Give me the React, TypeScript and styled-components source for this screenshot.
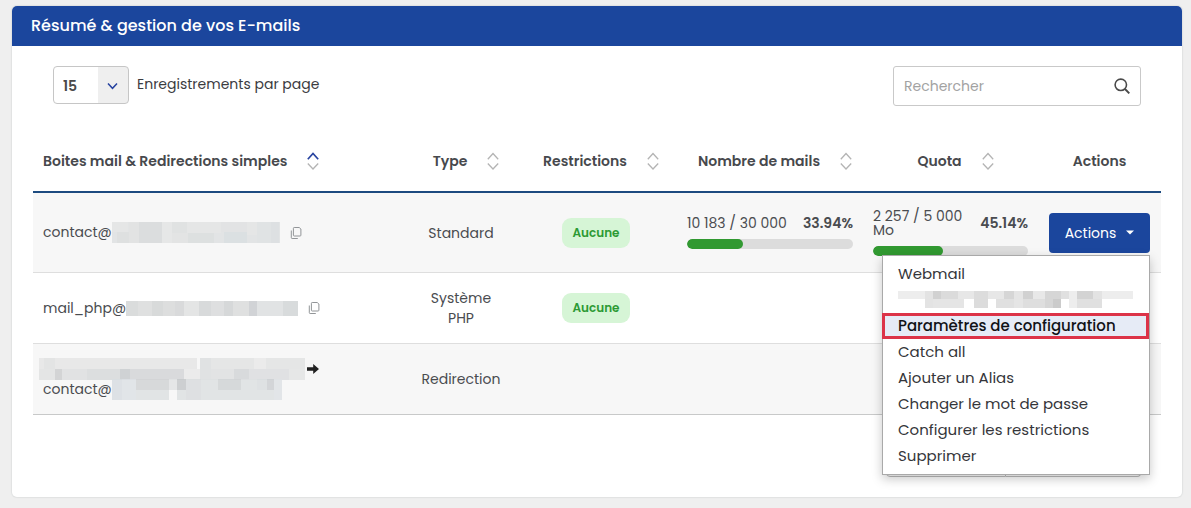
import React, { useState } from "react";
import styled, { createGlobalStyle, css } from "styled-components";

const GlobalStyle = createGlobalStyle`
  *, *::before, *::after { box-sizing: border-box; }
  body {
    margin: 0;
    background: #efefef;
    color: #4a4c50;
    font: 400 14px/20px Poppins, Inter, "Noto Sans", sans-serif;
  }
  button, input, select { font: inherit; color: inherit; }
`;

const Page = styled.main`
  padding: 6px 9px 11px 12px;
`;

const Panel = styled.section`
  background: #fff;
  border-radius: 5px;
  box-shadow: 0 0 1px 1px #e0e2e2;
`;

const PanelTitle = styled.h1`
  margin: 0;
  padding: 8px 19px;
  border-radius: 5px 5px 0 0;
  background: #1b469d;
  color: #fff;
  font-size: 16px;
  font-weight: 500;
  line-height: 24px;
`;

const PanelBody = styled.div`
  padding: 20px 21px;
`;

const Toolbar = styled.div`
  display: flex;
  justify-content: space-between;
  align-items: flex-start;
  padding: 0 20px;
`;

const PageSize = styled.label`
  display: flex;
  gap: 8px;
  color: #3b3c3f;
  line-height: 36px;
`;

const SelectBox = styled.span`
  display: grid;
  grid-template-columns: 1fr 31px;
  width: 76px;
  height: 38px;
  border: 1px solid #c6c6c6;
  border-radius: 4px;
  background: linear-gradient(90deg, #fff 44px, #efefef 44px);
  align-items: center;

  select {
    grid-area: 1 / 1 / 2 / 3;
    width: 100%;
    height: 38px;
    padding: 0 9px;
    border: 0;
    background: none;
    appearance: none;
    color: #4a4a4a;
    font-weight: 600;
  }

  svg {
    grid-area: 1 / 2;
    justify-self: center;
    pointer-events: none;
  }
`;

const SearchBox = styled.label`
  display: flex;
  align-items: center;
  width: 248px;
  height: 40px;
  padding: 0 10px;
  border: 1px solid #c9c9c9;
  border-radius: 3px;

  input {
    flex: 1;
    min-width: 0;
    padding: 0;
    border: 0;
    outline: 0;
    background: none;
  }
  input::placeholder { color: #a2a2a2; opacity: 1; }
`;

const Mailboxes = styled.table`
  width: 100%;
  margin-top: 24px;
  border-collapse: separate;
  border-spacing: 0;
  table-layout: fixed;
`;

const Col = styled.col<{ $width?: number }>`
  width: ${(p) => (p.$width ? `${p.$width}px` : "auto")};
`;

const HeadCell = styled.th<{ $first?: boolean }>`
  height: 63px;
  padding: 0 0 0 10px;
  border-bottom: 2px solid #1d4b80;
  color: #47494d;
  font-weight: 600;
  text-align: ${(p) => (p.$first ? "left" : "center")};
  white-space: nowrap;
`;

const PlainHeadCell = styled(HeadCell)`
  padding: 0;
`;

const SortButton = styled.button`
  display: inline-flex;
  align-items: center;
  gap: 20px;
  padding: 0;
  border: 0;
  background: none;
  font-weight: 600;
`;

const Row = styled.tr<{ $tall?: boolean; $last?: boolean }>`
  height: ${(p) => (p.$tall ? 80 : 71)}px;

  &:nth-child(odd) { background: #f7f7f7; }
  td { border-bottom: 1px solid ${(p) => (p.$last ? "#c8c9c9" : "#dedede")}; }
`;

const Cell = styled.td<{ $left?: boolean }>`
  padding: 0 10px;
  text-align: ${(p) => (p.$left ? "left" : "center")};
`;

const Narrow = styled.div`
  width: 70px;
  margin: 0 auto;
`;

const Address = styled.div`
  display: flex;
  align-items: center;
  line-height: 21px;
`;

const Source = styled(Address)`
  height: 21px;
  margin-left: -4px;
`;

const CopyButton = styled.button`
  display: flex;
  margin-left: 10px;
  padding: 0;
  border: 0;
  background: none;
  cursor: pointer;
`;

const Badge = styled.span`
  display: inline-block;
  padding: 5px 10px;
  border-radius: 9px;
  background: #d6f5d6;
  color: #2c9a34;
  font-size: 12px;
  font-weight: 600;
`;

const Usage = styled.div`
  display: grid;
  gap: 9px;
  text-align: left;
`;

const UsageText = styled.div`
  display: flex;
  justify-content: space-between;
  align-items: center;
  gap: 16px;
  line-height: 14px;
`;

const Percent = styled.strong`
  font-weight: 600;
`;

const Track = styled.div`
  height: 10px;
  border-radius: 5px;
  background: #dcdcdc;
  overflow: hidden;
`;

const Fill = styled.div`
  height: 100%;
  border-radius: 5px;
  background: #319931;
`;

const Dropdown = styled.div`
  position: relative;
  width: 101px;
  margin: 0 auto;
`;

const ActionsButton = styled.button`
  display: flex;
  justify-content: center;
  align-items: center;
  gap: 10px;
  width: 100%;
  height: 40px;
  border: 0;
  border-radius: 4px;
  background: #1b469d;
  color: #fff;
  cursor: pointer;
`;

const Menu = styled.ul`
  position: absolute;
  z-index: 2;
  top: 42px;
  right: 0;
  width: 268px;
  margin: 0;
  padding: 5px 0;
  border: 1px solid #a9a9a9;
  background: #fff;
  box-shadow: 0 4px 10px rgba(0, 0, 0, 0.22);
  list-style: none;
  text-align: left;
`;

const MenuItem = styled.button<{ $active?: boolean }>`
  display: flex;
  align-items: center;
  width: 100%;
  height: 26px;
  padding: 0 15px;
  border: 0;
  background: none;
  color: #35363a;
  font-size: 15px;
  cursor: pointer;

  ${(p) =>
    p.$active &&
    css`
      position: relative;
      width: 267px;
      margin-left: -1px;
      padding: 0 13px;
      border: 3px solid #dc3348;
      background: #e6ebf6;
      color: #111216;
      font-weight: 500;
    `}
`;

const Pager = styled.nav`
  display: flex;
  justify-content: flex-end;
  margin-top: 20px;
  padding-right: 20px;
`;

const PagerButton = styled.button<{ $edge: "left" | "right" }>`
  height: 42px;
  padding: 0;
  border: 1px solid #bcbcbc;
  background: #fff;
  ${(p) =>
    p.$edge === "left"
      ? css`
          width: 120px;
          border-radius: 4px 0 0 4px;
        `
      : css`
          width: 135px;
          border-left: 0;
          border-radius: 0 4px 4px 0;
        `}
`;

type Block = [x: number, y: number, w: number, h: number, fill: string];

const MosaicSvg = styled.svg`
  flex: none;
  opacity: 0.85;
`;

/* Pixelated strip that hides a private value. */
function Mosaic({ width, height, blocks }: { width: number; height: number; blocks: Block[] }) {
  return (
    <MosaicSvg width={width} height={height} aria-hidden="true" shapeRendering="crispEdges">
      {blocks.map(([x, y, w, h, fill], i) => (
        <rect key={i} x={x} y={y} width={w} height={h} fill={fill} />
      ))}
    </MosaicSvg>
  );
}

const contactBlocks: Block[] = [
  [0, 0, 168, 21, "#dfe1e2"], [0, 0, 16, 10, "#e3e4e4"], [5, 10, 12, 11, "#dadcdc"],
  [17, 0, 10, 21, "#dfe0e0"], [27, 0, 23, 21, "#d7d9da"], [50, 0, 10, 21, "#e4e5e5"],
  [60, 0, 15, 11, "#dddfdf"], [75, 0, 34, 11, "#e2e4e4"], [60, 11, 16, 10, "#e0e1e1"],
  [76, 11, 26, 10, "#d9dcdd"], [109, 0, 26, 10, "#dfe0e1"], [112, 10, 23, 11, "#d7dcdf"],
  [135, 0, 10, 13, "#e2e4e4"], [145, 0, 14, 21, "#dce0e1"], [159, 0, 8, 21, "#d9dddf"],
];

const phpBlocks: Block[] = [
  [0, 0, 172, 15, "#dadbdb"], [0, 0, 12, 15, "#d4d6d6"], [12, 0, 14, 15, "#dadbdb"],
  [26, 0, 11, 15, "#d2d4d4"], [37, 0, 12, 15, "#d8d9d9"], [49, 0, 9, 15, "#d3d4d5"],
  [58, 0, 15, 15, "#e0e1e1"], [73, 0, 12, 15, "#d2d4d5"], [85, 0, 13, 15, "#d9dadb"],
  [98, 0, 9, 15, "#d0d2d3"], [107, 0, 16, 15, "#dadbdb"], [123, 0, 8, 15, "#c9cccf"],
  [131, 0, 26, 15, "#dcdfe0"], [157, 0, 15, 15, "#d2d5d7"],
];

const sourceBlocks: Block[] = [
  [0, 0, 158, 11, "#e6e6e6"], [0, 11, 16, 11, "#e1e2e2"], [5, 0, 11, 11, "#e0e1e1"],
  [16, 11, 7, 11, "#cdcfd0"], [23, 11, 25, 11, "#dedfe0"], [48, 11, 33, 11, "#d8dadb"],
  [81, 11, 10, 11, "#c9ccce"], [91, 11, 54, 11, "#d4d6d8"], [145, 11, 16, 11, "#eaeaea"],
  [161, 0, 105, 11, "#e3e4e4"], [161, 0, 11, 22, "#dddfe0"], [172, 11, 23, 11, "#dfe0e1"],
  [195, 11, 15, 11, "#d3d6d8"], [210, 11, 40, 11, "#dcdee0"], [250, 11, 16, 11, "#e4e5e5"],
  [215, 0, 12, 11, "#e9eaea"],
];

const targetBlocks: Block[] = [
  [0, 0, 57, 21, "#dee1e3"], [0, 0, 10, 21, "#d9dee2"], [10, 0, 14, 21, "#dee2e6"],
  [24, 0, 33, 11, "#d2d4d5"], [57, 0, 8, 11, "#e2e4e5"], [65, 0, 105, 21, "#dee1e2"],
  [65, 0, 9, 11, "#c6c9cb"], [74, 0, 15, 21, "#dadddf"], [106, 0, 23, 11, "#d1d4d6"],
  [145, 0, 10, 11, "#dadee0"], [155, 0, 7, 11, "#cdd0d3"], [162, 0, 8, 21, "#dfe3e6"],
];

const menuBlocks: Block[] = [
  [0, 0, 235, 8, "#ebebeb"], [27, 0, 8, 17, "#dfdfdf"], [35, 0, 8, 8, "#cacaca"],
  [43, 0, 17, 8, "#d5d5d5"], [35, 8, 31, 9, "#e1e1e1"], [60, 0, 16, 8, "#e3e3e3"],
  [76, 0, 14, 17, "#d7d7d7"], [90, 0, 16, 8, "#e3e3e3"], [98, 8, 18, 9, "#dbdbdb"],
  [106, 0, 10, 8, "#cfcfcf"], [116, 0, 9, 17, "#e1e1e1"], [125, 0, 10, 8, "#c9c9c9"],
  [125, 8, 22, 9, "#d9d9d9"], [135, 0, 12, 8, "#e4e4e4"], [147, 0, 16, 17, "#d0d0d0"],
  [155, 8, 8, 9, "#c2c2c2"], [163, 0, 8, 8, "#dbdbdb"], [171, 0, 8, 17, "#ebebeb"],
  [179, 0, 16, 8, "#cccccc"], [179, 8, 25, 9, "#dbdbdb"], [195, 0, 9, 8, "#dfdfdf"],
];

const CopyIcon = () => (
  <svg width="12" height="14" viewBox="0 0 12 14" fill="none" stroke="#929598" strokeWidth="1" aria-hidden="true">
    <path d="M4.2 1.500h5L10.900 3v6.200a.8.8 0 0 1-.8.8H4.200a.8.8 0 0 1-.8-.8V2.300a.8.8 0 0 1 .8-.8Z" />
    <path d="M1.300 4.500v7.200a.8.8 0 0 0 .8.8h5.700" />
  </svg>
);

const SortIcon = ({ ascending }: { ascending?: boolean }) => (
  <svg width="12" height="18" viewBox="0 0 12 18" fill="none" strokeWidth={1.3} aria-hidden="true">
    <path d="M.8 7.200 6 1.500l5.200 5.700" stroke={ascending ? "#2743a0" : "#b4b4b4"} strokeWidth={ascending ? 1.7 : 1.3} />
    <path d="M.8 11.500 6 17l5.200-5.500" stroke="#b4b4b4" />
  </svg>
);

const ChevronIcon = () => (
  <svg width="11" height="8" viewBox="0 0 11 8" fill="none" stroke="#2743a0" strokeWidth="1.5" aria-hidden="true">
    <path d="M1 1.500 5.500 6.300 10 1.500" />
  </svg>
);

const SearchIcon = () => (
  <svg width="16" height="16" viewBox="0 0 16 16" fill="none" stroke="#4a4a4a" strokeWidth="1.6" aria-hidden="true">
    <circle cx="6.8" cy="6.8" r="5.7" />
    <path d="m11 11 4.300 4.400" strokeWidth="1.9" />
  </svg>
);

const CaretIcon = () => (
  <svg width="8" height="5" viewBox="0 0 8 5" fill="#fff" aria-hidden="true">
    <path d="M0 .4h8L4 4.600Z" />
  </svg>
);

const ArrowIcon = () => (
  <svg width="14" height="12" viewBox="0 0 14 12" fill="#222" aria-hidden="true">
    <path d="M1 4.300h6.200V1.100L13 6 7.200 10.900V7.700H1Z" />
  </svg>
);

const ArrowSlot = styled.span`
  display: flex;
  margin-left: 1px;
`;

function UsageMeter({ label, percent }: { label: string; percent: number }) {
  return (
    <Usage>
      <UsageText>
        <span>{label}</span>
        <Percent>{percent}%</Percent>
      </UsageText>
      <Track>
        <Fill style={{ width: `${percent}%` }} />
      </Track>
    </Usage>
  );
}

const columns = ["Boites mail & Redirections simples", "Type", "Restrictions", "Nombre de mails", "Quota"];
const menuTail = ["Catch all", "Ajouter un Alias", "Changer le mot de passe", "Configurer les restrictions", "Supprimer"];

export default function App() {
  const [open, setOpen] = useState(true);

  return (
    <Page>
      <GlobalStyle />
      <Panel>
        <PanelTitle>Résumé &amp; gestion de vos E-mails</PanelTitle>
        <PanelBody>
          <Toolbar>
            <PageSize>
              <SelectBox>
                <select defaultValue="15">
                  <option>15</option>
                </select>
                <ChevronIcon />
              </SelectBox>
              Enregistrements par page
            </PageSize>
            <SearchBox>
              <input type="text" placeholder="Rechercher" />
              <SearchIcon />
            </SearchBox>
          </Toolbar>

          <Mailboxes>
            <colgroup>
              <Col />
              <Col $width={108} />
              <Col $width={162} />
              <Col $width={186} />
              <Col $width={175} />
              <Col $width={123} />
            </colgroup>
            <thead>
              <tr>
                {columns.map((name, i) => (
                  <HeadCell key={name} $first={i === 0}>
                    <SortButton type="button">
                      {name}
                      <SortIcon ascending={i === 0} />
                    </SortButton>
                  </HeadCell>
                ))}
                <PlainHeadCell>Actions</PlainHeadCell>
              </tr>
            </thead>
            <tbody>
              <Row $tall>
                <Cell $left>
                  <Address>
                    contact@
                    <Mosaic width={168} height={21} blocks={contactBlocks} />
                    <CopyButton type="button"><CopyIcon /></CopyButton>
                  </Address>
                </Cell>
                <Cell>Standard</Cell>
                <Cell><Badge>Aucune</Badge></Cell>
                <Cell><UsageMeter label="10 183 / 30 000" percent={33.94} /></Cell>
                <Cell><UsageMeter label="2 257 / 5 000 Mo" percent={45.14} /></Cell>
                <Cell>
                  <Dropdown>
                    <ActionsButton type="button" aria-expanded={open} onClick={() => setOpen(!open)}>
                      Actions
                      <CaretIcon />
                    </ActionsButton>
                    {open && (
                      <Menu>
                        <li><MenuItem type="button">Webmail</MenuItem></li>
                        <li>
                          <MenuItem type="button">
                            <Mosaic width={235} height={17} blocks={menuBlocks} />
                          </MenuItem>
                        </li>
                        <li><MenuItem type="button" $active>Paramètres de configuration</MenuItem></li>
                        {menuTail.map((label) => (
                          <li key={label}><MenuItem type="button">{label}</MenuItem></li>
                        ))}
                      </Menu>
                    )}
                  </Dropdown>
                </Cell>
              </Row>
              <Row>
                <Cell $left>
                  <Address>
                    mail_php@
                    <Mosaic width={172} height={15} blocks={phpBlocks} />
                    <CopyButton type="button"><CopyIcon /></CopyButton>
                  </Address>
                </Cell>
                <Cell><Narrow>Système PHP</Narrow></Cell>
                <Cell><Badge>Aucune</Badge></Cell>
                <Cell />
                <Cell />
                <Cell />
              </Row>
              <Row $last>
                <Cell $left>
                  <Source>
                    <Mosaic width={266} height={22} blocks={sourceBlocks} />
                    <ArrowSlot><ArrowIcon /></ArrowSlot>
                  </Source>
                  <Address>
                    contact@
                    <Mosaic width={170} height={21} blocks={targetBlocks} />
                  </Address>
                </Cell>
                <Cell>Redirection</Cell>
                <Cell />
                <Cell />
                <Cell />
                <Cell />
              </Row>
            </tbody>
          </Mailboxes>

          <Pager>
            <PagerButton type="button" $edge="left" />
            <PagerButton type="button" $edge="right" />
          </Pager>
        </PanelBody>
      </Panel>
    </Page>
  );
}
